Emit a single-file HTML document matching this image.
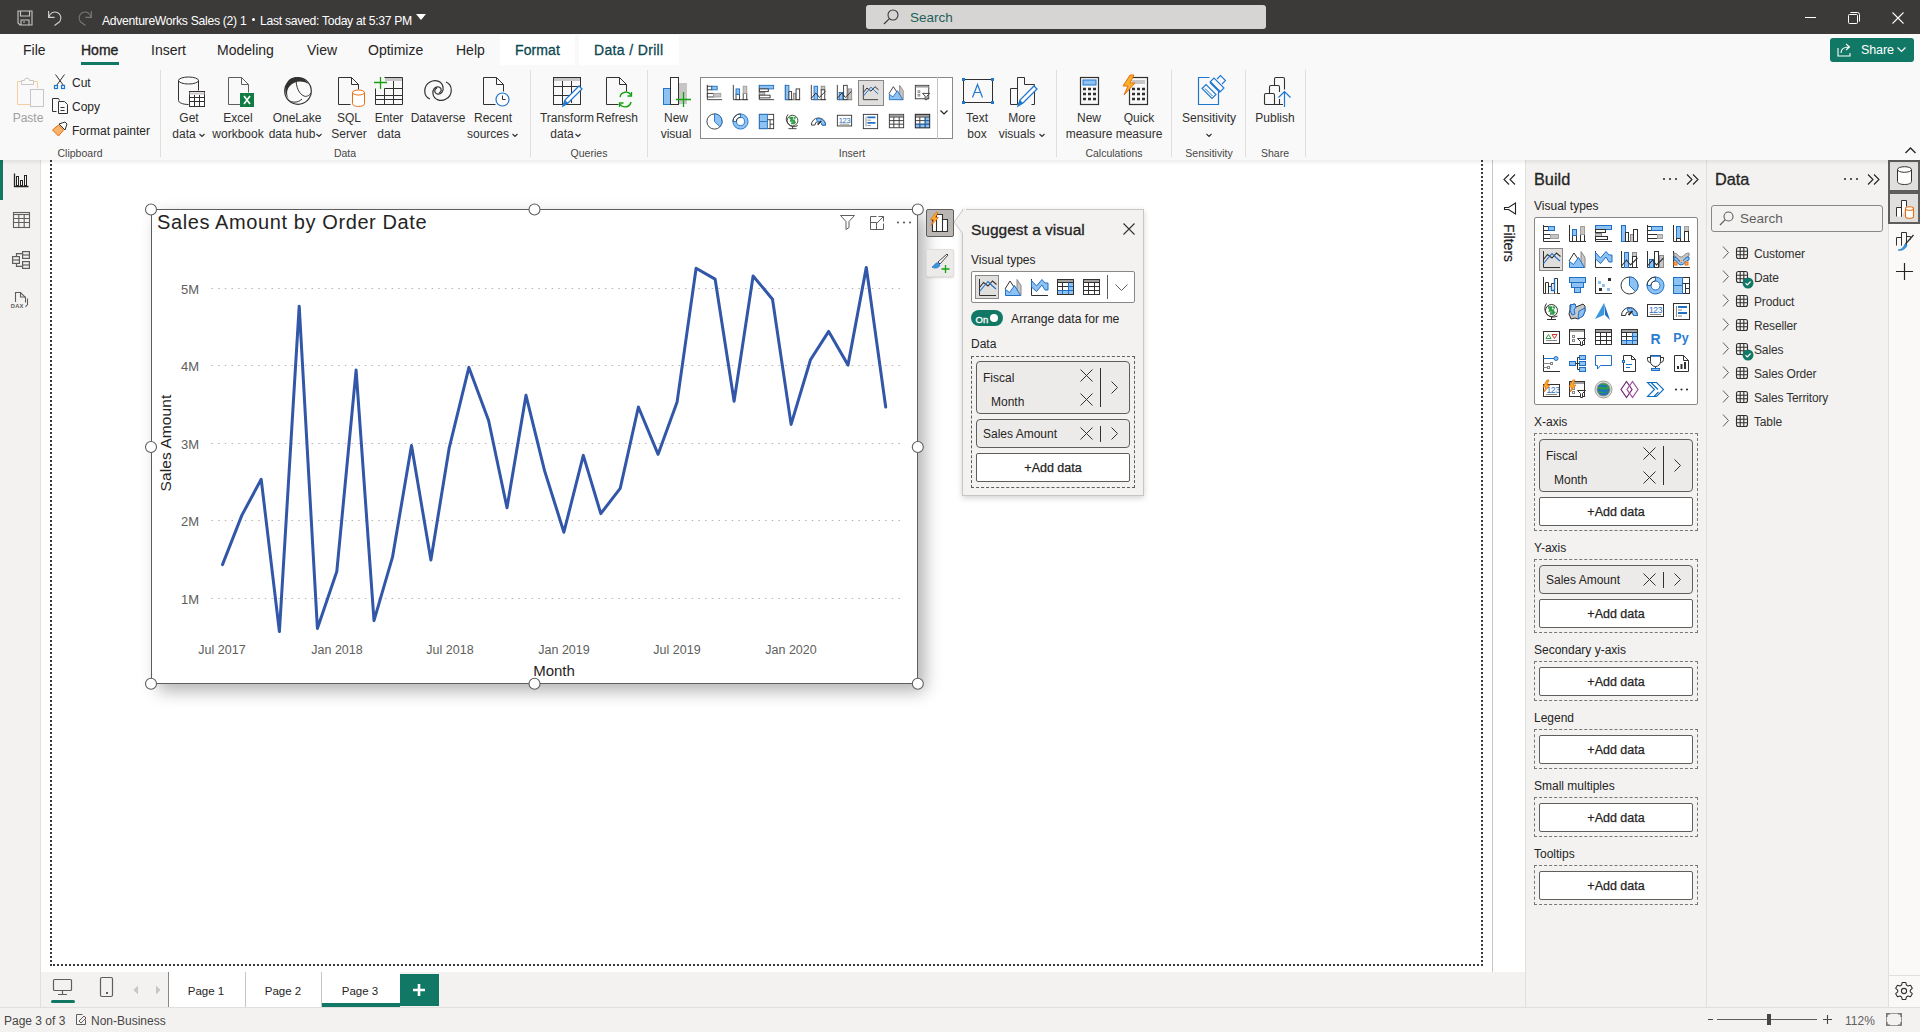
<!DOCTYPE html>
<html><head><meta charset="utf-8">
<style>
*{box-sizing:border-box;margin:0;padding:0}
html,body{width:1920px;height:1032px;overflow:hidden;background:#fff;font-family:"Liberation Sans",sans-serif;color:#252423}
.a{position:absolute}
.t{position:absolute;white-space:nowrap;line-height:1}
svg{position:absolute;overflow:visible}
#titlebar{left:0;top:0;width:1920px;height:34px;background:#3b3a39}
#ribbon{left:0;top:34px;width:1920px;height:126px;background:#f9f9f9}
#leftnav{left:0;top:160px;width:41px;height:847px;background:#f3f2f1;border-right:1px solid #e1dfdd}
#canvas{left:41px;top:160px;width:1451px;height:812px;background:#fff}
#tabbar{left:41px;top:972px;width:1484px;height:35px;background:#f3f2f1}
#status{left:0;top:1007px;width:1920px;height:25px;background:#f3f2f1;border-top:1px solid #e1dfdd}
#filters{left:1492px;top:160px;width:33px;height:812px;background:#fff;border-left:1px solid #c8c6c4}
#build{left:1525px;top:160px;width:182px;height:847px;background:#f3f2f1;border-left:1px solid #e1dfdd;border-right:1px solid #e1dfdd}
#data{left:1707px;top:160px;width:181px;height:847px;background:#f3f2f1}
#rstrip{left:1888px;top:160px;width:32px;height:847px;background:#faf9f8;border-left:1px solid #e1dfdd}
.lbl{font-size:12px;color:#252423}
.grp{font-size:10.5px;color:#484644}
.rb{font-size:12px;color:#323130;text-align:center}
</style></head><body>
<div id="titlebar" class="a"></div>
<div id="ribbon" class="a"></div><div class="a" style="left:0;top:160px;width:1920px;height:5px;background:linear-gradient(rgba(0,0,0,0.07),rgba(0,0,0,0));z-index:5"></div>
<div id="leftnav" class="a"></div>
<div id="canvas" class="a"></div>
<div id="tabbar" class="a"></div>
<div id="status" class="a"></div>
<div id="filters" class="a"></div>
<div id="build" class="a"></div>
<div id="data" class="a"></div>
<div id="rstrip" class="a"></div>

<!-- TITLEBAR -->
<svg style="left:17px;top:10px" width="16" height="16" viewBox="0 0 16 16"><path d="M1 1h14v14H3l-2-2z" fill="none" stroke="#c8c6c4" stroke-width="1.1"/><path d="M3.5 1v5h9V1M4 15v-5h8v5M6 12h2" fill="none" stroke="#c8c6c4" stroke-width="1.1"/></svg>
<svg style="left:48px;top:10px" width="14" height="16" viewBox="0 0 14 16"><path d="M0.6 1v6.4h6" fill="none" stroke="#d2d0ce" stroke-width="1.1"/><path d="M1 7A6 6 0 1 1 11.6 11.8L6.5 15.5" fill="none" stroke="#d2d0ce" stroke-width="1.1"/></svg>
<svg style="left:78px;top:10px" width="14" height="16" viewBox="0 0 14 16"><path d="M13.4 1v6.4h-6" fill="none" stroke="#797775" stroke-width="1.1"/><path d="M13 7A6 6 0 1 0 2.4 11.8L7.5 15.5" fill="none" stroke="#797775" stroke-width="1.1"/></svg>
<div class="t" style="left:102px;top:15px;font-size:12.2px;color:#fff;letter-spacing:-0.3px">AdventureWorks Sales (2) 1</div>
<div class="a" style="left:252px;top:18px;width:3px;height:3px;border-radius:50%;background:#fff"></div>
<div class="t" style="left:260px;top:15px;font-size:12.2px;color:#fff;letter-spacing:-0.3px">Last saved: Today at 5:37 PM</div>
<svg style="left:416px;top:14px" width="10" height="6"><path d="M0 0h10L5 6z" fill="#fff"/></svg>
<div class="a" style="left:866px;top:5px;width:400px;height:24px;background:#d6d5d4;border-radius:3px"></div>
<svg style="left:883px;top:9px" width="16" height="16" viewBox="0 0 16 16"><circle cx="10" cy="6" r="5" fill="none" stroke="#3b3a39" stroke-width="1.1"/><path d="M6.4 9.6L1 15" stroke="#3b3a39" stroke-width="1.2"/></svg>
<div class="t" style="left:910px;top:10.5px;font-size:13.5px;color:#1f5f59">Search</div>
<div class="a" style="left:1805px;top:17px;width:11px;height:1px;background:#fff"></div>
<svg style="left:1848px;top:12px" width="12" height="12" viewBox="0 0 12 12"><rect x="0.5" y="2.5" width="9" height="9" rx="1" fill="none" stroke="#fff"/><path d="M2.5 0.5h7a2 2 0 0 1 2 2v7" fill="none" stroke="#fff"/></svg>
<svg style="left:1892px;top:12px" width="12" height="12" viewBox="0 0 12 12"><path d="M0.5 0.5l11 11M11.5 0.5l-11 11" stroke="#fff" stroke-width="1.1"/></svg>

<!-- RIBBON TABS -->
<div class="a" style="left:500px;top:35px;width:75px;height:30px;background:#fff"></div>
<div class="a" style="left:579px;top:35px;width:100px;height:30px;background:#fff"></div>
<div class="t" style="left:23px;top:43px;font-size:14px;color:#252423">File</div>
<div class="t" style="left:81px;top:43px;font-size:14px;color:#252423;-webkit-text-stroke:0.35px #252423">Home</div>
<div class="a" style="left:81px;top:62px;width:38px;height:3px;background:#117865"></div>
<div class="t" style="left:151px;top:43px;font-size:14px;color:#252423">Insert</div>
<div class="t" style="left:217px;top:43px;font-size:14px;color:#252423">Modeling</div>
<div class="t" style="left:307px;top:43px;font-size:14px;color:#252423">View</div>
<div class="t" style="left:368px;top:43px;font-size:14px;color:#252423">Optimize</div>
<div class="t" style="left:456px;top:43px;font-size:14px;color:#252423">Help</div>
<div class="t" style="left:515px;top:43px;font-size:14px;color:#0d4750;-webkit-text-stroke:0.3px #0d4750;letter-spacing:0.1px">Format</div>
<div class="t" style="left:594px;top:43px;font-size:14px;color:#0d4750;-webkit-text-stroke:0.3px #0d4750;letter-spacing:0.35px">Data / Drill</div>
<!-- share -->
<div class="a" style="left:1830px;top:38px;width:84px;height:24px;background:#117865;border-radius:3px"></div>
<svg style="left:1837px;top:43px" width="16" height="14" viewBox="0 0 16 14"><path d="M1 5v8h12v-3" fill="none" stroke="#fff" stroke-width="1.1"/><path d="M4 10c0-4 3-6 8-6M9 1l3.5 3L9 7" fill="none" stroke="#fff" stroke-width="1.1"/></svg>
<div class="t" style="left:1861px;top:44px;font-size:12.5px;color:#fff;letter-spacing:-0.1px">Share</div>
<svg style="left:1897px;top:47px" width="9" height="6"><path d="M0.5 0.5l4 4 4-4" fill="none" stroke="#fff" stroke-width="1.2"/></svg>
<svg style="left:1905px;top:147px" width="11" height="7"><path d="M0.5 6l5-5 5 5" fill="none" stroke="#252423" stroke-width="1.3"/></svg>
<!-- separators -->
<div class="a" style="left:160px;top:70px;width:1px;height:87px;background:#e1dfdd"></div>
<div class="a" style="left:530px;top:70px;width:1px;height:87px;background:#e1dfdd"></div>
<div class="a" style="left:647px;top:70px;width:1px;height:87px;background:#e1dfdd"></div>
<div class="a" style="left:1056px;top:70px;width:1px;height:87px;background:#e1dfdd"></div>
<div class="a" style="left:1171px;top:70px;width:1px;height:87px;background:#e1dfdd"></div>
<div class="a" style="left:1245px;top:70px;width:1px;height:87px;background:#e1dfdd"></div>
<div class="a" style="left:1305px;top:70px;width:1px;height:87px;background:#e1dfdd"></div>
<!-- group labels -->
<div class="t grp" style="left:80px;top:148px;transform:translateX(-50%)">Clipboard</div>
<div class="t grp" style="left:345px;top:148px;transform:translateX(-50%)">Data</div>
<div class="t grp" style="left:589px;top:148px;transform:translateX(-50%)">Queries</div>
<div class="t grp" style="left:852px;top:148px;transform:translateX(-50%)">Insert</div>
<div class="t grp" style="left:1114px;top:148px;transform:translateX(-50%)">Calculations</div>
<div class="t grp" style="left:1209px;top:148px;transform:translateX(-50%)">Sensitivity</div>
<div class="t grp" style="left:1275px;top:148px;transform:translateX(-50%)">Share</div>
<div class="t rb" style="left:28px;top:112px;transform:translateX(-50%);color:#a19f9d">Paste</div>
<div class="t rb" style="left:189px;top:112px;transform:translateX(-50%);color:#323130">Get</div>
<div class="t rb" style="left:189px;top:128px;transform:translateX(-50%);color:#323130">data<span style="display:inline-block;width:10px"></span></div>
<div class="t rb" style="left:238px;top:112px;transform:translateX(-50%);color:#323130">Excel</div>
<div class="t rb" style="left:238px;top:128px;transform:translateX(-50%);color:#323130">workbook</div>
<div class="t rb" style="left:297px;top:112px;transform:translateX(-50%);color:#323130">OneLake</div>
<div class="t rb" style="left:297px;top:128px;transform:translateX(-50%);color:#323130">data hub<span style="display:inline-block;width:10px"></span></div>
<div class="t rb" style="left:349px;top:112px;transform:translateX(-50%);color:#323130">SQL</div>
<div class="t rb" style="left:349px;top:128px;transform:translateX(-50%);color:#323130">Server</div>
<div class="t rb" style="left:389px;top:112px;transform:translateX(-50%);color:#323130">Enter</div>
<div class="t rb" style="left:389px;top:128px;transform:translateX(-50%);color:#323130">data</div>
<div class="t rb" style="left:438px;top:112px;transform:translateX(-50%);color:#323130">Dataverse</div>
<div class="t rb" style="left:493px;top:112px;transform:translateX(-50%);color:#323130">Recent</div>
<div class="t rb" style="left:493px;top:128px;transform:translateX(-50%);color:#323130">sources<span style="display:inline-block;width:10px"></span></div>
<div class="t rb" style="left:567px;top:112px;transform:translateX(-50%);color:#323130">Transform</div>
<div class="t rb" style="left:567px;top:128px;transform:translateX(-50%);color:#323130">data<span style="display:inline-block;width:10px"></span></div>
<div class="t rb" style="left:617px;top:112px;transform:translateX(-50%);color:#323130">Refresh</div>
<div class="t rb" style="left:676px;top:112px;transform:translateX(-50%);color:#323130">New</div>
<div class="t rb" style="left:676px;top:128px;transform:translateX(-50%);color:#323130">visual</div>
<div class="t rb" style="left:977px;top:112px;transform:translateX(-50%);color:#323130">Text</div>
<div class="t rb" style="left:977px;top:128px;transform:translateX(-50%);color:#323130">box</div>
<div class="t rb" style="left:1022px;top:112px;transform:translateX(-50%);color:#323130">More</div>
<div class="t rb" style="left:1022px;top:128px;transform:translateX(-50%);color:#323130">visuals<span style="display:inline-block;width:10px"></span></div>
<div class="t rb" style="left:1089px;top:112px;transform:translateX(-50%);color:#323130">New</div>
<div class="t rb" style="left:1089px;top:128px;transform:translateX(-50%);color:#323130">measure</div>
<div class="t rb" style="left:1139px;top:112px;transform:translateX(-50%);color:#323130">Quick</div>
<div class="t rb" style="left:1139px;top:128px;transform:translateX(-50%);color:#323130">measure</div>
<div class="t rb" style="left:1209px;top:112px;transform:translateX(-50%);color:#323130">Sensitivity</div>
<div class="t rb" style="left:1275px;top:112px;transform:translateX(-50%);color:#323130">Publish</div>

<div class="t lbl" style="left:72px;top:77px">Cut</div>
<div class="t lbl" style="left:72px;top:101px">Copy</div>
<div class="t lbl" style="left:72px;top:125px">Format painter</div>
<!-- gallery -->
<div class="a" style="left:700px;top:77px;width:253px;height:62px;border:1px solid #8a8886;background:#fff"></div>
<div class="a" style="left:858px;top:80px;width:26px;height:26px;background:#e1dfdd;border:1px solid #8a8886"></div>
<div class="a" style="left:937px;top:77px;width:1px;height:62px;background:#c8c6c4"></div>
<svg style="left:940px;top:110px" width="8" height="5"><path d="M0.5 0.5l3.5 3.5 3.5-3.5" fill="none" stroke="#252423" stroke-width="1.2"/></svg>

<svg style="left:0;top:0" width="1920" height="170" viewBox="0 0 1920 170">
<g fill="none" stroke-width="1">
<!-- chevrons for dropdown labels -->
<path d="M199.5 134l2.5 2.5 2.5-2.5M316.5 134l2.5 2.5 2.5-2.5M512.5 134l2.5 2.5 2.5-2.5M575.5 134l2.5 2.5 2.5-2.5M1039.5 134l2.5 2.5 2.5-2.5M1206.5 134l2.5 2.5 2.5-2.5" stroke="#323130" stroke-width="1.1"/>
<!-- paste -->
<path d="M21.5 81.5h-4v23h13" stroke="#f6cf9d"/><path d="M33.5 81.5h4v7" stroke="#f6cf9d"/>
<path d="M21.5 84.5v-4h3a2.5 2.5 0 0 1 5 0h4v4z" stroke="#c8c6c4"/>
<rect x="30.5" y="89.5" width="13" height="17" stroke="#c8c6c4"/>
<!-- cut -->
<path d="M55.5 74.5l8 11M64.5 74.5l-8 11" stroke="#323130"/>
<rect x="54.5" y="85.5" width="3" height="3" stroke="#1f77d0" stroke-width="1.2"/><rect x="61.5" y="85.5" width="3" height="3" stroke="#1f77d0" stroke-width="1.2"/>
<!-- copy -->
<path d="M56.5 111.5h-4v-13h6l1 2" stroke="#323130"/><path d="M58.5 101.5h6l3 3v9h-9z" stroke="#323130"/><path d="M60.5 107.5h4M60.5 110.5h4" stroke="#323130"/>
<!-- format painter -->
<path d="M52.5 130l6-5 5 5-5 6z" fill="#f7b46b" stroke="#e86c11"/><path d="M59 124l6-2 2 2-2 6z" fill="#fff" stroke="#323130"/>
<!-- get data -->
<path d="M178.5 80.5v20c0 2 4 4 10 4M198.5 80.5v10" stroke="#323130"/><ellipse cx="188.5" cy="80.5" rx="10" ry="3.5" stroke="#323130"/>
<rect x="189.5" y="91.5" width="15" height="15" fill="#fff" stroke="#323130"/><path d="M189.5 93.5h15" stroke="#c8c6c4" stroke-width="2"/><path d="M189.5 97.5h15M189.5 101.5h15M194.5 95v12M199.5 95v12" stroke="#323130"/>
<!-- excel -->
<path d="M228.5 77.5h13l7 7v8M240.5 104.5h-12v-27M241.5 77.5v7h7" stroke="#605e5c"/>
<rect x="240" y="93" width="14" height="14" fill="#107c41" stroke="none"/><path d="M244 96l6 8M250 96l-6 8" stroke="#fff" stroke-width="1.6"/>
<!-- onelake -->
<circle cx="298" cy="91" r="13.3" stroke="#323130" stroke-width="1.2"/><path d="M287 83c2-5 8-7 14-5c3 1 6 3 7 6c-6-4-14-3-19 3c-3 4-2 9 0 12c-4-4-5-11-2-16z" fill="#323130" stroke="none"/><path d="M296 79c0 8 3 15 8 17c2 1 5 0 7-3" stroke="#323130"/><path d="M288 100c4 3 10 3 14-1" stroke="#323130"/>
<!-- sql -->
<path d="M350.5 104.5h-12v-27h13l7 7v5M351.5 77.5v7h7" stroke="#323130"/>
<path d="M352.5 92.5v11c0 2 3 3 6 3s6-1 6-3v-11" stroke="#e86c11" fill="#fff"/><ellipse cx="358.5" cy="92.5" rx="6" ry="2.5" stroke="#e86c11" fill="#fff"/>
<!-- enter data -->
<path d="M384.5 77.5h18v27h-27v-16" stroke="#323130"/><rect x="385" y="78" width="17" height="3" fill="#c8c6c4" stroke="none"/>
<path d="M375.5 95.5h27M375.5 99.5h27M384.5 88.5h18M384.5 88.5v16M393.5 81v24" stroke="#323130"/>
<path d="M380.5 77v12M374 82.5h13" stroke="#13a10e" stroke-width="1.3"/>
<!-- dataverse -->
<path d="M430 99c-7-3-7-13 0-17c5-3 12-1 13 5c1 4-2 8-6 7c-3-1-3-5 0-6" stroke="#323130" stroke-width="1.2"/><path d="M446 82c7 3 7 13 0 17c-5 3-12 1-13-5c-1-4 2-8 6-7c3 1 3 5 0 6" stroke="#323130" stroke-width="1.2"/>
<!-- recent sources -->
<path d="M495.5 104.5h-12v-27h13l7 7v7M496.5 77.5v7h7" stroke="#323130"/>
<circle cx="502.5" cy="99.5" r="6.5" fill="#fff" stroke="#1f77d0" stroke-width="1.2"/><path d="M502.5 95.5v4h3" stroke="#323130"/>
<!-- transform -->
<rect x="553.5" y="77.5" width="27" height="27" stroke="#323130"/><rect x="554" y="78" width="26" height="3" fill="#c8c6c4" stroke="none"/>
<path d="M553.5 86.5h27M553.5 95.5h22M562.5 81v24M571.5 81v22" stroke="#323130"/>
<path d="M563 106l2-6 14-14 3 3-14 14z" fill="#fff" stroke="#1f77d0" stroke-width="1.3"/><path d="M563 106l2-6 3 3z" fill="#1f77d0"/>
<!-- refresh -->
<path d="M618.5 104.5h-12v-27h13l7 7v7M619.5 77.5v7h7" stroke="#323130"/>
<path d="M620 97a6 6 0 0 1 11-2M631 102a6 6 0 0 1-11 2" stroke="#13a10e" stroke-width="1.4"/><path d="M631.5 92v4h-4M619.5 107v-4h4" stroke="#13a10e" stroke-width="1.3"/>
<!-- new visual -->
<rect x="663.5" y="88.5" width="7" height="16" fill="#8ec2f2" stroke="#1f77d0"/><rect x="670.5" y="77.5" width="8" height="27" fill="#fff" stroke="#323130"/><rect x="679" y="83" width="8" height="21" fill="#c8c6c4" stroke="none"/>
<path d="M683.5 92v15M676 99.5h15" stroke="#13a10e" stroke-width="1.3"/>
<!-- text box -->
<rect x="963.5" y="79.5" width="29" height="23" stroke="#323130"/>
<rect x="962" y="78" width="3" height="3" fill="#1f77d0" stroke="none"/><rect x="991" y="78" width="3" height="3" fill="#1f77d0" stroke="none"/><rect x="962" y="101" width="3" height="3" fill="#1f77d0" stroke="none"/><rect x="991" y="101" width="3" height="3" fill="#1f77d0" stroke="none"/>
<path d="M972.5 97.5l5-13 5 13M974.5 92.5h6" stroke="#1f77d0" stroke-width="1.2"/>
<!-- more visuals -->
<path d="M1017.5 104.5h-7v-16h7M1017.5 104.5v-27h7v7h10v20h-3" stroke="#323130"/>
<path d="M1018 106l2-6 14-14 3 3-14 14z" fill="#fff" stroke="#1f77d0" stroke-width="1.3"/><path d="M1018 106l2-6 3 3z" fill="#1f77d0"/>
<!-- new measure -->
<rect x="1080.5" y="77.5" width="18" height="27" stroke="#323130" stroke-width="1.2"/><rect x="1083" y="80" width="13" height="5" fill="#8ec2f2" stroke="#1f77d0"/>
<path d="M1083 89h3M1088 89h3M1093 89h3M1083 94h3M1088 94h3M1093 94h3M1083 99h3M1088 99h3M1093 99h3" stroke="#323130" stroke-width="2.4"/>
<!-- quick measure -->
<rect x="1129.5" y="77.5" width="18" height="27" stroke="#323130" stroke-width="1.2"/><rect x="1132" y="80" width="13" height="4" fill="#c8c6c4" stroke="none"/>
<path d="M1132 89h3M1137 89h3M1142 89h3M1132 94h3M1137 94h3M1142 94h3M1132 99h3M1137 99h3M1142 99h3" stroke="#323130" stroke-width="2.4"/>
<path d="M1130 75l-7 11h5l-4 9 11-12h-5l4-8z" fill="#f7b22c" stroke="#e86c11"/>
<!-- sensitivity -->
<path d="M1209.5 77.5h-11v27h20v-12.5" stroke="#1f77d0" stroke-width="1.2"/>
<path d="M1202 88.5l4-4 10 10-4 4z" stroke="#1f77d0" stroke-width="1.1"/><path d="M1205 88.5l7.5 7.5" stroke="#1f77d0" stroke-width="1"/>
<path d="M1210 82l4-4 10 10-4 4z" stroke="#1f77d0" stroke-width="1.1"/><path d="M1210.5 82.5l9.5 9.5" stroke="#1f77d0" stroke-width="2"/><path d="M1217 79l3.5-3.5 5 5-3.5 3.5" stroke="#1f77d0" stroke-width="1.1"/>
<!-- publish -->
<path d="M1274.5 104.5h-8.5a1.5 1.5 0 0 1-1.5-1.5v-8a1.5 1.5 0 0 1 1.5-1.5h7a1.5 1.5 0 0 1 1.5 1.5v9.5M1269.5 93.5v-6.5a1.5 1.5 0 0 1 1.5-1.5h7a1.5 1.5 0 0 1 1.5 1.5v5M1279.5 99v5.5M1274.5 85.5v-6.5a1.5 1.5 0 0 1 1.5-1.5h7a1.5 1.5 0 0 1 1.5 1.5v10.5M1264.5 104.5h18.5" stroke="#323130" stroke-width="1.1"/>
<path d="M1284.5 107v-15.5M1278.5 97.5l6-6 6 6" stroke="#1f77d0" stroke-width="1.2"/>
</g></svg>

<!-- LEFT NAV -->
<div class="a" style="left:0;top:160px;width:3px;height:40px;background:#117865"></div>
<svg style="left:0;top:160px" width="41" height="160" viewBox="0 160 41 160">
<g fill="none" stroke="#252423" stroke-width="1">
<path d="M14.5 173.5v13h14" stroke-width="1.3"/><rect x="16.5" y="176.5" width="2" height="9"/><rect x="20.5" y="180.5" width="2" height="5"/><rect x="24.5" y="175.5" width="2" height="10"/>
<rect x="13.5" y="212.5" width="16" height="15" stroke="#605e5c" stroke-width="1.1"/><path d="M13.5 214.5h16" stroke="#605e5c" stroke-width="1.1"/><path d="M13.5 218.5h16M13.5 222.5h16M18.8 214.5v13M24.2 214.5v13" stroke="#605e5c" stroke-width="1.1"/>
<g stroke="#605e5c" stroke-width="1.2"><rect x="12.6" y="256.6" width="6.8" height="6.8"/><path d="M12.6 260h6.8"/><rect x="22.6" y="251.6" width="6.8" height="6.8"/><path d="M22.6 255h6.8"/><rect x="22.6" y="261.6" width="6.8" height="6.8"/><path d="M22.6 265h6.8"/><path d="M16.5 256.6v-3h6M16.5 263.4v3h6"/></g>
<path d="M15.5 302v-9.5h5l5 5v5" stroke="#605e5c" stroke-width="1.1"/><path d="M20.5 292.5v4.5h5" stroke="#605e5c" stroke-width="1.1"/><path d="M27.5 298.5v6l-2 2.5" stroke="#605e5c" stroke-width="1.1"/>
</g>
<text x="10.8" y="307.6" font-size="5.8" fill="#605e5c" font-weight="bold" font-family="Liberation Sans" letter-spacing="0.2">DAX</text>
</svg>
<!-- CANVAS -->
<div class="a" style="left:50px;top:160px;width:1433px;height:806px;border-left:2px dotted #3b3a39;border-right:2px dotted #3b3a39;border-bottom:2px dotted #3b3a39"></div>
<!-- VISUAL -->
<div class="a" style="left:151px;top:209px;width:767px;height:475px;background:#fff;border:1px solid #605e5c;box-shadow:7px 7px 16px rgba(0,0,0,0.3)"></div>
<div class="t" style="left:157px;top:212px;font-size:20px;color:#252423;letter-spacing:0.6px">Sales Amount by Order Date</div>
<svg style="left:0;top:0" width="1000" height="700" viewBox="0 0 1000 700">
<g stroke="#b3b0ad" stroke-width="1.2" stroke-dasharray="1.4 5.27">
<path d="M211.5 288.5H900M211.5 365.5H900M211.5 443.5H900M211.5 520.5H900M211.5 598.5H900"/>
</g>
<polyline points="222.5,564.6 241.8,515.4 261.2,479.3 279.4,631.6 299.2,306.2 317.4,628.5 336.8,571.5 356.1,370.1 374.0,620.7 392.5,557.2 411.5,445.6 430.9,560.0 449.1,448.4 468.9,367.4 488.6,420.5 507.0,507.7 526.0,395.3 544.6,470.9 563.9,532.2 583.3,455.4 600.8,513.6 620.2,488.4 638.4,407.0 658.1,454.3 677.1,401.9 696.1,268.2 715.1,279.1 734.1,401.2 753.1,276.0 772.5,299.2 791.1,424.4 810.5,359.7 828.7,331.4 848.0,365.1 866.3,267.4 885.7,407.0" fill="none" stroke="#3257a8" stroke-width="3" stroke-linejoin="round" stroke-linecap="round"/>
<g fill="none" stroke="#605e5c" stroke-width="1">
<path d="M840.5 215.5h14l-5.5 6v6l-3 2v-8z"/>
<path d="M870.5 229.5v-13h6M883.5 223.5v6h-13M870.5 222.5h6v7M876.5 223.5l7-7M878.5 216.5h5v5"/>
</g>
<g fill="#605e5c"><circle cx="898" cy="222.5" r="1.1"/><circle cx="904" cy="222.5" r="1.1"/><circle cx="910" cy="222.5" r="1.1"/></g>
<g fill="#fff" stroke="#605e5c" stroke-width="1.1">
<circle cx="151" cy="209.5" r="5.5"/><circle cx="534.5" cy="209.5" r="5.5"/><circle cx="917.8" cy="209.5" r="5.5"/>
<circle cx="151" cy="447" r="5.5"/><circle cx="917.8" cy="447" r="5.5"/>
<circle cx="151" cy="683.8" r="5.5"/><circle cx="534.5" cy="683.8" r="5.5"/><circle cx="917.8" cy="683.8" r="5.5"/>
</g>
</svg>
<div class="t" style="left:166px;top:443px;font-size:15.5px;color:#252423;transform:translate(-50%,-50%) rotate(-90deg);letter-spacing:0.1px">Sales Amount</div>
<div class="t" style="left:199px;top:283px;font-size:13px;color:#605e5c;transform:translateX(-100%)">5M</div>
<div class="t" style="left:199px;top:360px;font-size:13px;color:#605e5c;transform:translateX(-100%)">4M</div>
<div class="t" style="left:199px;top:438px;font-size:13px;color:#605e5c;transform:translateX(-100%)">3M</div>
<div class="t" style="left:199px;top:515px;font-size:13px;color:#605e5c;transform:translateX(-100%)">2M</div>
<div class="t" style="left:199px;top:593px;font-size:13px;color:#605e5c;transform:translateX(-100%)">1M</div>
<div class="t" style="left:222px;top:644px;font-size:12.5px;color:#605e5c;transform:translateX(-50%)">Jul 2017</div>
<div class="t" style="left:337px;top:644px;font-size:12.5px;color:#605e5c;transform:translateX(-50%)">Jan 2018</div>
<div class="t" style="left:450px;top:644px;font-size:12.5px;color:#605e5c;transform:translateX(-50%)">Jul 2018</div>
<div class="t" style="left:564px;top:644px;font-size:12.5px;color:#605e5c;transform:translateX(-50%)">Jan 2019</div>
<div class="t" style="left:677px;top:644px;font-size:12.5px;color:#605e5c;transform:translateX(-50%)">Jul 2019</div>
<div class="t" style="left:791px;top:644px;font-size:12.5px;color:#605e5c;transform:translateX(-50%)">Jan 2020</div>
<div class="t" style="left:554px;top:663px;font-size:15px;color:#252423;transform:translateX(-50%)">Month</div>
<!-- PART2 -->
<svg width="0" height="0" style="position:absolute"><defs><symbol id="i-sbar" viewBox="0 0 19 19" overflow="visible"><g fill="none" stroke-width="1"><path d="M1.5 1v16.5H18" stroke="#323130"/><rect x="1.5" y="2.5" width="5" height="4" fill="#fff" stroke="#323130"/><rect x="6.5" y="2.5" width="6" height="4" fill="#8ec2f2" stroke="#1f6fc5"/><rect x="1.5" y="10.5" width="7" height="4" fill="#fff" stroke="#323130"/><rect x="8.5" y="10.5" width="8" height="4" fill="#c8c6c4" stroke="#a19f9d"/></g></symbol><symbol id="i-scol" viewBox="0 0 19 19" overflow="visible"><g fill="none" stroke-width="1"><path d="M1.5 1v16.5H18" stroke="#323130"/><rect x="4.5" y="11.5" width="4" height="6" fill="#fff" stroke="#323130"/><rect x="4.5" y="5.5" width="4" height="6" fill="#8ec2f2" stroke="#1f6fc5"/><rect x="12.5" y="10.5" width="4" height="7" fill="#fff" stroke="#323130"/><rect x="12.5" y="2.5" width="4" height="8" fill="#c8c6c4" stroke="#a19f9d"/></g></symbol><symbol id="i-cbar" viewBox="0 0 19 19" overflow="visible"><g fill="none" stroke-width="1"><path d="M1.5 1v16.5H18" stroke="#323130"/><rect x="1.5" y="1.5" width="16" height="4" fill="#8ec2f2" stroke="#1f6fc5"/><rect x="1.5" y="5.5" width="10" height="3" fill="#fff" stroke="#323130"/><rect x="1.5" y="9.5" width="6" height="3" fill="#c8c6c4" stroke="#8a8886"/><rect x="1.5" y="12.5" width="12" height="3" fill="#fff" stroke="#323130"/></g></symbol><symbol id="i-ccol" viewBox="0 0 19 19" overflow="visible"><g fill="none" stroke-width="1"><path d="M1.5 1v16.5H18" stroke="#323130"/><rect x="1.5" y="1.5" width="4" height="16" fill="#8ec2f2" stroke="#1f6fc5"/><rect x="5.5" y="8.5" width="3" height="9" fill="#fff" stroke="#323130"/><rect x="10.5" y="10.5" width="3" height="7" fill="#c8c6c4" stroke="#8a8886"/><rect x="13.5" y="5.5" width="4" height="12" fill="#fff" stroke="#323130"/></g></symbol><symbol id="i-pbar" viewBox="0 0 19 19" overflow="visible"><g fill="none" stroke-width="1"><path d="M1.5 1v16.5H18" stroke="#323130"/><rect x="1.5" y="2.5" width="4" height="4" fill="#fff" stroke="#323130"/><rect x="5.5" y="2.5" width="11" height="4" fill="#8ec2f2" stroke="#1f6fc5"/><rect x="1.5" y="10.5" width="10" height="4" fill="#fff" stroke="#323130"/><rect x="11.5" y="10.5" width="5" height="4" fill="#c8c6c4" stroke="#a19f9d"/></g></symbol><symbol id="i-pcol" viewBox="0 0 19 19" overflow="visible"><g fill="none" stroke-width="1"><path d="M1.5 1v16.5H18" stroke="#323130"/><rect x="4.5" y="2.5" width="4" height="12" fill="#8ec2f2" stroke="#1f6fc5"/><rect x="4.5" y="14.5" width="4" height="3" fill="#fff" stroke="#323130"/><rect x="12.5" y="2.5" width="4" height="5" fill="#c8c6c4" stroke="#a19f9d"/><rect x="12.5" y="7.5" width="4" height="10" fill="#fff" stroke="#323130"/></g></symbol><symbol id="i-line" viewBox="0 0 19 19" overflow="visible"><g fill="none" stroke-width="1"><path d="M1.5 1v16.5H18" stroke="#323130"/><path d="M1.5 9.5l4-5 4.5 3.5 4.5-5 4 3.5" stroke="#323130" stroke-width="1.1"/><path d="M1.5 13.5l8.5-10 4 4 4 3.5" stroke="#1f6fc5" stroke-width="1.1"/></g></symbol><symbol id="i-area" viewBox="0 0 19 19" overflow="visible"><g fill="none" stroke-width="1"><path d="M13 1.5l4 6v10h-4z" fill="#c8c6c4" stroke="#8a8886"/><path d="M1 11l5-8 6 9" fill="#fff" stroke="#323130"/><path d="M1.5 17.5v-6l4 3 5-7 6 10z" fill="#8ec2f2" stroke="#1f6fc5"/></g></symbol><symbol id="i-sarea" viewBox="0 0 19 19" overflow="visible"><g fill="none" stroke-width="1"><path d="M1.5 1v16.5H18" stroke="#323130"/><path d="M1.5 2.5l5 5.5 5.5-6.5 3 3.5h3v7h-3l-3-5-5.5 6.5-5-4.5z" fill="#8ec2f2" stroke="#1f6fc5"/></g></symbol><symbol id="i-lscol" viewBox="0 0 19 19" overflow="visible"><g fill="none" stroke-width="1"><path d="M1.5 1v16.5H18" stroke="#323130"/><rect x="4.5" y="2.5" width="4" height="15" fill="#8ec2f2" stroke="#1f6fc5"/><rect x="12.5" y="2.5" width="4" height="4" fill="#c8c6c4" stroke="#8a8886"/><rect x="12.5" y="6.5" width="4" height="11" fill="#fff" stroke="#323130"/><path d="M1.5 16l5-6 4 5 7-7" stroke="#323130" stroke-width="1.1"/></g></symbol><symbol id="i-lccol" viewBox="0 0 19 19" overflow="visible"><g fill="none" stroke-width="1"><path d="M1.5 1v16.5H18" stroke="#323130"/><rect x="3.5" y="9.5" width="4" height="8" fill="#8ec2f2" stroke="#1f6fc5"/><rect x="8.5" y="1.5" width="4" height="16" fill="#fff" stroke="#323130"/><rect x="13.5" y="5.5" width="4" height="12" fill="#c8c6c4" stroke="#8a8886"/><path d="M1.5 16l5-6 4 5 7-7" stroke="#323130" stroke-width="1.1"/></g></symbol><symbol id="i-ribbon" viewBox="0 0 19 19" overflow="visible"><g fill="none" stroke-width="1"><path d="M1.5 1v16.5H18" stroke="#323130"/><path d="M2 3c4 0 4 4 7 4s3-4 8-4v3c-4 0-4 5-8 5s-3-5-7-5z" fill="#c8c6c4" stroke="#8a8886"/><path d="M2 7c4 0 4 5 7 5s3-5 8-5v3c-4 0-4 5-8 5s-3-5-7-5z" fill="#8ec2f2" stroke="#1f6fc5"/><rect x="2" y="12" width="3" height="3" fill="#f7b46b" stroke="#e86c11"/><rect x="13" y="12" width="3" height="3" fill="#f7b46b" stroke="#e86c11"/><rect x="8" y="10" width="3" height="2" fill="#f7b46b"/></g></symbol><symbol id="i-water" viewBox="0 0 19 19" overflow="visible"><g fill="none" stroke-width="1"><path d="M1.5 1v16.5H18" stroke="#323130"/><path d="M3.5 17.5V6.5h3v11M6.5 17.5V10.5h3v-3h3v10M12.5 17.5V2.5h3v15" fill="#fff" stroke="#323130"/><path d="M9.5 9.5v5h3v-12" stroke="#1f6fc5" stroke-width="1.4"/></g></symbol><symbol id="i-funnel" viewBox="0 0 19 19" overflow="visible"><g fill="none" stroke-width="1"><rect x="1.5" y="1.5" width="16" height="5" fill="#8ec2f2" stroke="#1f6fc5"/><rect x="3.5" y="6.5" width="12" height="5" fill="#8ec2f2" stroke="#1f6fc5"/><rect x="6.5" y="11.5" width="6" height="5" fill="#8ec2f2" stroke="#1f6fc5"/></g></symbol><symbol id="i-scatter" viewBox="0 0 19 19" overflow="visible"><g fill="none" stroke-width="1"><path d="M1.5 1v16.5H18" stroke="#323130"/><rect x="5" y="12" width="3" height="3" fill="#323130"/><rect x="14" y="2" width="3" height="3" fill="#323130"/><rect x="4" y="5" width="3" height="3" fill="#8ec2f2"/><rect x="8" y="8" width="3" height="3" fill="#8ec2f2"/><rect x="13" y="12" width="3" height="3" fill="#8ec2f2"/></g></symbol><symbol id="i-pie" viewBox="0 0 19 19" overflow="visible"><g fill="none" stroke-width="1"><circle cx="9.5" cy="9.5" r="8.5" fill="#fff" stroke="#323130"/><path d="M9.5 1a8.5 8.5 0 0 1 6 14.5L9.5 9.5z" fill="#8ec2f2" stroke="#1f6fc5"/></g></symbol><symbol id="i-donut" viewBox="0 0 19 19" overflow="visible"><g fill="none" stroke-width="1"><circle cx="9.5" cy="9.5" r="6.5" stroke="#fff" stroke-width="4"/><path d="M9.5 3a6.5 6.5 0 1 1-6.5 6.5" stroke="#8ec2f2" stroke-width="4"/><circle cx="9.5" cy="9.5" r="8.5" stroke="#1f6fc5"/><circle cx="9.5" cy="9.5" r="4.5" stroke="#1f6fc5"/><path d="M1 9.5a8.5 8.5 0 0 1 8.5-8.5M5 9.5a4.5 4.5 0 0 1 4.5-4.5" stroke="#323130"/><path d="M9.5 1v4M1 9.5h4" stroke="#1f6fc5"/></g></symbol><symbol id="i-treemap" viewBox="0 0 19 19" overflow="visible"><g fill="none" stroke-width="1"><rect x="1.5" y="1.5" width="16" height="16" fill="#fff" stroke="#323130"/><rect x="1.5" y="1.5" width="9" height="16" fill="#8ec2f2" stroke="#1f6fc5"/><path d="M1.5 9.5h9" stroke="#1f6fc5"/><path d="M10.5 7.5h7M13.5 7.5v10M13.5 12.5h4" stroke="#323130"/></g></symbol><symbol id="i-globe" viewBox="0 0 19 19" overflow="visible"><g fill="none" stroke-width="1"><circle cx="9.5" cy="8.5" r="6" fill="#fff" stroke="#323130"/><path d="M6 5.5h3l-1 3h3v3h-3" fill="none" stroke="#2f9e44" stroke-width="2.4"/><path d="M11 5l2 1M12 10l1 1" stroke="#2f9e44" stroke-width="2"/><path d="M4.5 1.5a8.5 8.5 0 0 0 11 12.5M9.5 15v2.5M5 17.5h9" stroke="#323130"/></g></symbol><symbol id="i-fmap" viewBox="0 0 19 19" overflow="visible"><g fill="none" stroke-width="1"><path d="M2 3l5-1 1 3 7-3 2 2v5l-2 5-5 3-3-1-4 1-2-5 1-4z" fill="#c8c6c4" stroke="#323130"/><path d="M2 3l5-1 1 3-2 3 1 4-3 1-2-5 1-4zM11 9l6-3v3l-2 5-5 3z" fill="#8ec2f2" stroke="#1f6fc5"/></g></symbol><symbol id="i-azmap" viewBox="0 0 19 19" overflow="visible"><g fill="none" stroke-width="1"><path d="M10 1L1 17l9-4z" fill="#3a96dd"/><path d="M10 1l1 12 5 5z" fill="#1f6fc5"/></g></symbol><symbol id="i-gauge" viewBox="0 0 19 19" overflow="visible"><g fill="none" stroke-width="1"><path d="M1.5 13.5a8 8 0 0 1 16 0h-4a4 4 0 0 0-8 0z" fill="#fff" stroke="#323130"/><path d="M7 6.5a8 8 0 0 1 10.5 7h-4a4 4 0 0 0-5-3.5z" fill="#8ec2f2" stroke="#1f6fc5"/><path d="M8.5 13l4-4" stroke="#323130" stroke-width="1.8"/></g></symbol><symbol id="i-card" viewBox="0 0 19 19" overflow="visible"><g fill="none" stroke-width="1"><rect x="1.5" y="2.5" width="16" height="12" fill="#fff" stroke="#323130"/><text x="9.5" y="10.8" font-size="8.5" text-anchor="middle" fill="#1f6fc5" font-family="Liberation Sans" letter-spacing="-0.4">123</text><path d="M4 12.5h11" stroke="#8a8886"/></g></symbol><symbol id="i-mrcard" viewBox="0 0 19 19" overflow="visible"><g fill="none" stroke-width="1"><rect x="1.5" y="1.5" width="16" height="16" fill="#fff" stroke="#323130"/><path d="M4.5 4v11" stroke="#8a8886"/><path d="M6 5h9M6 11h9" stroke="#1f6fc5" stroke-width="2"/><path d="M6 8h4M6 14h4" stroke="#8a8886"/></g></symbol><symbol id="i-kpi" viewBox="0 0 19 19" overflow="visible"><g fill="none" stroke-width="1"><rect x="1.5" y="3.5" width="16" height="12" fill="#fff" stroke="#323130"/><path d="M4 10.5l2.5-4 2.5 4z" fill="#fff" stroke="#2f9e44"/><path d="M10 6.5h5l-2.5 4z" fill="#fff" stroke="#d13438"/><path d="M4 12.5h11" stroke="#8a8886"/></g></symbol><symbol id="i-slicer" viewBox="0 0 19 19" overflow="visible"><g fill="none" stroke-width="1"><rect x="1.5" y="1.5" width="15" height="15" fill="#fff" stroke="#323130"/><rect x="2" y="2" width="14" height="2" fill="#a19f9d"/><rect x="4.5" y="7.5" width="2" height="2" stroke="#8a8886"/><rect x="4.5" y="11.5" width="2" height="2" stroke="#8a8886"/><path d="M9.5 10.5h8l-3 3v4h-2v-4z" fill="#fff" stroke="#323130"/></g></symbol><symbol id="i-table" viewBox="0 0 19 19" overflow="visible"><g fill="none" stroke-width="1"><rect x="1.5" y="1.5" width="16" height="15" fill="#fff" stroke="#323130"/><rect x="2" y="2" width="15" height="2" fill="#a19f9d"/><path d="M1.5 4.5h16M1.5 8.5h16M1.5 12.5h16M6.5 4.5v12M12.5 4.5v12" stroke="#323130"/></g></symbol><symbol id="i-matrix" viewBox="0 0 19 19" overflow="visible"><g fill="none" stroke-width="1"><rect x="1.5" y="1.5" width="16" height="15" fill="#fff" stroke="#323130"/><rect x="2" y="2" width="15" height="2" fill="#a19f9d"/><rect x="12.5" y="4.5" width="5" height="12" fill="#8ec2f2"/><rect x="1.5" y="12.5" width="16" height="4" fill="#8ec2f2"/><path d="M1.5 4.5h16M1.5 8.5h16M1.5 12.5h16M6.5 4.5v12M12.5 4.5v12" stroke="#323130"/><path d="M12.5 8.5h5M1.5 12.5h16M6.5 12.5v4M12.5 4.5v12" stroke="#1f6fc5"/><rect x="1.5" y="1.5" width="16" height="15" stroke="#323130"/></g></symbol><symbol id="i-R" viewBox="0 0 19 19" overflow="visible"><g fill="none" stroke-width="1"><text x="9.5" y="15.5" font-size="14" font-weight="bold" text-anchor="middle" fill="#2b7cd3" font-family="Liberation Sans">R</text></g></symbol><symbol id="i-Py" viewBox="0 0 19 19" overflow="visible"><g fill="none" stroke-width="1"><text x="9" y="14" font-size="12.5" font-weight="bold" text-anchor="middle" fill="#2b7cd3" font-family="Liberation Sans">Py</text></g></symbol><symbol id="i-keyinf" viewBox="0 0 19 19" overflow="visible"><g fill="none" stroke-width="1"><path d="M1.5 1v16.5H18" stroke="#323130"/><path d="M1.5 4.5h11" stroke="#1f6fc5"/><circle cx="14" cy="4.5" r="2" fill="#8ec2f2" stroke="#1f6fc5"/><path d="M1.5 9.5h7M1.5 13.5h4" stroke="#8a8886"/><rect x="8.5" y="8.5" width="2" height="2" stroke="#8a8886"/><rect x="5.5" y="12.5" width="2" height="2" stroke="#8a8886"/></g></symbol><symbol id="i-decomp" viewBox="0 0 19 19" overflow="visible"><g fill="none" stroke-width="1"><rect x="1.5" y="7.5" width="6" height="4" fill="#8ec2f2" stroke="#1f6fc5"/><rect x="11.5" y="1.5" width="6" height="4" fill="#8ec2f2" stroke="#1f6fc5"/><rect x="11.5" y="7.5" width="6" height="4" fill="#8ec2f2" stroke="#1f6fc5"/><rect x="11.5" y="13.5" width="6" height="4" fill="#8ec2f2" stroke="#1f6fc5"/><path d="M7.5 9.5h2M9.5 3.5v12M9.5 3.5h2M9.5 9.5h2M9.5 15.5h2" stroke="#323130"/></g></symbol><symbol id="i-qa" viewBox="0 0 19 19" overflow="visible"><g fill="none" stroke-width="1"><path d="M1.5 1.5h16v10H6.5l-3 3.5v-3.5h-2z" fill="#fff" stroke="#1f6fc5"/></g></symbol><symbol id="i-narr" viewBox="0 0 19 19" overflow="visible"><g fill="none" stroke-width="1"><path d="M3.5 1.5h8l4 4v12h-12z" fill="#fff" stroke="#323130"/><path d="M11.5 1.5v4h4" stroke="#323130"/><rect x="2.5" y="6.5" width="2" height="2" fill="#8ec2f2" stroke="#1f6fc5"/><path d="M6 10.5h6M6 13.5h4" stroke="#1f6fc5"/></g></symbol><symbol id="i-trophy" viewBox="0 0 19 19" overflow="visible"><g fill="none" stroke-width="1"><path d="M4.5 1.5h10v6a5 5 0 0 1-10 0z" fill="#fff" stroke="#323130"/><path d="M4.5 3.5H1.5v2a3 3 0 0 0 3 3M14.5 3.5h3v2a3 3 0 0 1-3 3M9.5 12.5v2" stroke="#323130"/><path d="M5 2h9" stroke="#1f6fc5" stroke-width="1.6"/><rect x="5.5" y="14.5" width="8" height="2" fill="#8ec2f2" stroke="#1f6fc5"/></g></symbol><symbol id="i-pagin" viewBox="0 0 19 19" overflow="visible"><g fill="none" stroke-width="1"><path d="M2.5 1.5h9l5 5v11h-14z" fill="#fff" stroke="#323130"/><path d="M11.5 1.5v5h5" stroke="#323130"/><path d="M6 15v-3M9.5 15v-5M13 15v-7" stroke="#323130" stroke-width="2"/></g></symbol><symbol id="i-lcard" viewBox="0 0 19 19" overflow="visible"><g fill="none" stroke-width="1"><rect x="1.5" y="4.5" width="16" height="12" fill="#fff" stroke="#323130"/><text x="11" y="12.5" font-size="8.5" text-anchor="middle" fill="#1f6fc5" font-family="Liberation Sans" letter-spacing="-0.4">123</text><path d="M4 14.5h11" stroke="#8a8886"/><path d="M5 0l-4 7h3l-2 5 6-7H5l2-5z" fill="#f7b22c" stroke="#e86c11" stroke-width="0.8"/></g></symbol><symbol id="i-lslicer" viewBox="0 0 19 19" overflow="visible"><g fill="none" stroke-width="1"><rect x="1.5" y="1.5" width="15" height="15" fill="#fff" stroke="#323130"/><rect x="2" y="2" width="14" height="2" fill="#a19f9d"/><rect x="4.5" y="7.5" width="2" height="2" stroke="#8a8886"/><rect x="4.5" y="11.5" width="2" height="2" stroke="#8a8886"/><path d="M9.5 10.5h8l-3 3v4h-2v-4z" fill="#fff" stroke="#323130"/><path d="M5 0l-4 7h3l-2 5 6-7H5l2-5z" fill="#f7b22c" stroke="#e86c11" stroke-width="0.8"/></g></symbol><symbol id="i-arcgis" viewBox="0 0 19 19" overflow="visible"><g fill="none" stroke-width="1"><circle cx="9.5" cy="9.5" r="8.5" fill="#e1dfdd" stroke="#a19f9d"/><circle cx="9.5" cy="9.5" r="6.5" fill="#2f9e44"/><path d="M4 6c3-1 6 1 9 0M3.5 10c3 0 6 2 12 0M5 14c2 0 5 1 9-1" stroke="#1f6fc5" stroke-width="2.2"/><circle cx="9.5" cy="9.5" r="6.5" stroke="#8a8886" stroke-width="0.8"/></g></symbol><symbol id="i-papps" viewBox="0 0 19 19" overflow="visible"><g fill="none" stroke-width="1"><path d="M6.5 1.5l5.5 8-5.5 8-5.5-8z" stroke="#742774" stroke-width="1.2"/><path d="M12.5 1.5l5.5 8-5.5 8-5.5-8z" stroke="#9b4f96" stroke-width="1.2"/></g></symbol><symbol id="i-pauto" viewBox="0 0 19 19" overflow="visible"><g fill="none" stroke-width="1"><path d="M1.5 2.5h9l7 7-7 7h-9l7-7z" fill="#fff" stroke="#0f6cbd" stroke-width="1.1"/><path d="M5 2.5l7 7M8 16.5l4.5-4.5" stroke="#0f6cbd" stroke-width="1.1"/></g></symbol><symbol id="i-more" viewBox="0 0 19 19" overflow="visible"><g fill="none" stroke-width="1"><circle cx="4" cy="9.5" r="1.1" fill="#323130"/><circle cx="9.5" cy="9.5" r="1.1" fill="#323130"/><circle cx="15" cy="9.5" r="1.1" fill="#323130"/></g></symbol></defs></svg>
<svg style="left:706px;top:84px" width="17" height="17"><use href="#i-sbar" width="17" height="17"/></svg><svg style="left:732px;top:84px" width="17" height="17"><use href="#i-scol" width="17" height="17"/></svg><svg style="left:758px;top:84px" width="17" height="17"><use href="#i-cbar" width="17" height="17"/></svg><svg style="left:784px;top:84px" width="17" height="17"><use href="#i-ccol" width="17" height="17"/></svg><svg style="left:810px;top:84px" width="17" height="17"><use href="#i-lscol" width="17" height="17"/></svg><svg style="left:836px;top:84px" width="17" height="17"><use href="#i-lccol" width="17" height="17"/></svg><svg style="left:862px;top:84px" width="17" height="17"><use href="#i-line" width="17" height="17"/></svg><svg style="left:888px;top:84px" width="17" height="17"><use href="#i-area" width="17" height="17"/></svg><svg style="left:914px;top:84px" width="17" height="17"><use href="#i-slicer" width="17" height="17"/></svg><svg style="left:706px;top:113px" width="17" height="17"><use href="#i-pie" width="17" height="17"/></svg><svg style="left:732px;top:113px" width="17" height="17"><use href="#i-donut" width="17" height="17"/></svg><svg style="left:758px;top:113px" width="17" height="17"><use href="#i-treemap" width="17" height="17"/></svg><svg style="left:784px;top:113px" width="17" height="17"><use href="#i-globe" width="17" height="17"/></svg><svg style="left:810px;top:113px" width="17" height="17"><use href="#i-gauge" width="17" height="17"/></svg><svg style="left:836px;top:113px" width="17" height="17"><use href="#i-card" width="17" height="17"/></svg><svg style="left:862px;top:113px" width="17" height="17"><use href="#i-mrcard" width="17" height="17"/></svg><svg style="left:888px;top:113px" width="17" height="17"><use href="#i-table" width="17" height="17"/></svg><svg style="left:914px;top:113px" width="17" height="17"><use href="#i-matrix" width="17" height="17"/></svg>
<div class="a" style="left:926px;top:209px;width:28px;height:28px;background:#b9b6b3;border:1px solid #605e5c;border-radius:2px"></div>
<svg style="left:926px;top:209px" width="28" height="28" viewBox="0 0 28 28"><path d="M6.5 22.5v-13h4v13zM10.5 22.5v-17h6v17zM16.5 22.5v-12h5v12z" fill="#fff" stroke="#323130" stroke-width="1.1"/><path d="M10 3.5l-5.5 7h3.5l-3 6 7.5-8h-3.5l3-5z" fill="#f7b22c" stroke="#e86c11" stroke-width="0.8"/></svg>
<div class="a" style="left:926px;top:249px;width:28px;height:28px;background:#edebe9;border:1px solid #e1dfdd;border-radius:2px;box-shadow:0 1px 2px rgba(0,0,0,0.15)"></div>
<svg style="left:926px;top:249px" width="28" height="28" viewBox="0 0 28 28"><path d="M22 6l-8 9-2-2 9-8z" fill="#fff" stroke="#323130" stroke-width="0.9"/><path d="M6 18c2-1 4-5 6-4l2 2c-1 3-5 4-8 2z" fill="#3a96dd" stroke="#1f77d0" stroke-width="0.8"/><path d="M19.5 16v8M15.5 20h8" stroke="#13a10e" stroke-width="1.3"/></svg>
<!-- POPUP -->
<div class="a" style="left:962px;top:209px;width:182px;height:287px;background:#f3f2f1;border:1px solid #c8c6c4;box-shadow:0 2px 6px rgba(0,0,0,0.18)"></div>
<svg style="left:950px;top:205px" width="16" height="34" viewBox="0 0 16 34"><path d="M13 5L4 17l9 12" fill="#f3f2f1" stroke="#c8c6c4"/><rect x="13" y="3" width="3" height="28" fill="#f3f2f1"/></svg>
<div class="t" style="left:971px;top:222px;font-size:15.5px;color:#252423;-webkit-text-stroke:0.3px #252423">Suggest a visual</div>
<svg style="left:1123px;top:223px" width="12" height="12"><path d="M0.5 0.5l11 11M11.5 0.5l-11 11" stroke="#323130" stroke-width="1.1"/></svg>
<div class="t" style="left:971px;top:254px;font-size:12px;color:#252423">Visual types</div>
<div class="a" style="left:971px;top:271px;width:164px;height:32px;background:#fff;border:1px solid #8a8886;border-radius:2px"></div>
<div class="a" style="left:975px;top:275px;width:24px;height:24px;background:#e1dfdd;border:1px solid #8a8886"></div>
<div class="a" style="left:1107px;top:275px;width:1px;height:24px;background:#605e5c"></div>
<svg style="left:1115px;top:284px" width="13" height="8"><path d="M0.5 0.5l6 6 6-6" fill="none" stroke="#605e5c" stroke-width="1"/></svg>
<div class="a" style="left:971px;top:310px;width:32px;height:16px;background:#117865;border-radius:8px"></div>
<div class="t" style="left:975.5px;top:314.5px;font-size:9.5px;color:#fff;-webkit-text-stroke:0.3px #fff">On</div>
<div class="a" style="left:990px;top:314px;width:8px;height:8px;background:#fff;border-radius:50%"></div>
<div class="t" style="left:1011px;top:313px;font-size:12.2px;color:#252423">Arrange data for me</div>
<div class="t" style="left:971px;top:338px;font-size:12px;color:#252423">Data</div>
<div class="a" style="left:971px;top:356px;width:164px;height:132px;border:1px dashed #605e5c"></div>
<svg style="left:978px;top:278px" width="19" height="19"><use href="#i-line" width="19" height="19"/></svg><svg style="left:1004px;top:278px" width="19" height="19"><use href="#i-area" width="19" height="19"/></svg><svg style="left:1030px;top:278px" width="19" height="19"><use href="#i-sarea" width="19" height="19"/></svg><svg style="left:1056px;top:278px" width="19" height="19"><use href="#i-matrix" width="19" height="19"/></svg><svg style="left:1082px;top:278px" width="19" height="19"><use href="#i-table" width="19" height="19"/></svg><div class="a" style="left:976px;top:361px;width:154px;height:53px;background:#edebe9;border:1px solid #605e5c;border-radius:4px"></div>
<div class="t" style="left:983px;top:372px;font-size:12px;color:#252423">Fiscal</div>
<div class="t" style="left:991px;top:396px;font-size:12px;color:#252423">Month</div>
<svg style="left:1080px;top:369px" width="13" height="37"><path d="M0.5 0.5l12 12M12.5 0.5l-12 12M0.5 24.5l12 12M12.5 24.5l-12 12" stroke="#323130" stroke-width="1"/></svg>
<div class="a" style="left:1100px;top:368px;width:1px;height:39px;background:#323130"></div>
<svg style="left:1111px;top:381px" width="8" height="13"><path d="M0.5 0.5l6 6-6 6" fill="none" stroke="#323130" stroke-width="1"/></svg>
<div class="a" style="left:976px;top:419px;width:154px;height:29px;background:#edebe9;border:1px solid #605e5c;border-radius:4px"></div>
<div class="t" style="left:983px;top:428px;font-size:12px;color:#252423">Sales Amount</div>
<svg style="left:1080px;top:427px" width="13" height="13"><path d="M0.5 0.5l12 12M12.5 0.5l-12 12" stroke="#323130" stroke-width="1"/></svg>
<div class="a" style="left:1100px;top:426px;width:1px;height:16px;background:#323130"></div>
<svg style="left:1111px;top:427px" width="8" height="13"><path d="M0.5 0.5l6 6-6 6" fill="none" stroke="#323130" stroke-width="1"/></svg>
<div class="a" style="left:976px;top:453px;width:154px;height:29px;background:#fff;border:1px solid #605e5c;border-radius:2px"></div>
<div class="t" style="left:1053px;top:462px;font-size:12.5px;color:#252423;transform:translateX(-50%);-webkit-text-stroke:0.25px #252423">+Add data</div>

<svg style="left:1503px;top:174px" width="13" height="11"><path d="M6 0.5L1 5.5l5 5M12 0.5L7 5.5l5 5" fill="none" stroke="#252423" stroke-width="1.1"/></svg>
<svg style="left:1504px;top:202px" width="13" height="13"><path d="M0.5 5.5h4L11.5 1v11L4.5 7.5h-4z" fill="none" stroke="#252423" stroke-width="1.1"/></svg>
<div class="t" style="left:1509px;top:243px;font-size:14px;color:#252423;transform:translate(-50%,-50%) rotate(90deg);-webkit-text-stroke:0.2px #252423">Filters</div>

<div class="t" style="left:1534px;top:171px;font-size:16.3px;color:#252423;-webkit-text-stroke:0.3px #252423">Build</div>
<svg style="left:1662px;top:177px" width="16" height="4"><circle cx="2" cy="2" r="1.1" fill="#323130"/><circle cx="8" cy="2" r="1.1" fill="#323130"/><circle cx="14" cy="2" r="1.1" fill="#323130"/></svg>
<svg style="left:1686px;top:174px" width="13" height="11"><path d="M1 0.5l5 5-5 5M7 0.5l5 5-5 5" fill="none" stroke="#252423" stroke-width="1.1"/></svg>
<div class="t" style="left:1534px;top:200px;font-size:12px;color:#252423">Visual types</div>
<div class="a" style="left:1534px;top:217px;width:164px;height:188px;background:#fff;border:1px solid #8a8886;border-radius:2px"></div>
<div class="a" style="left:1539px;top:248px;width:24px;height:23px;background:#e1dfdd;border:1px solid #8a8886"></div>
<svg style="left:1542px;top:224px" width="19" height="19"><use href="#i-sbar" width="19" height="19"/></svg><svg style="left:1568px;top:224px" width="19" height="19"><use href="#i-scol" width="19" height="19"/></svg><svg style="left:1594px;top:224px" width="19" height="19"><use href="#i-cbar" width="19" height="19"/></svg><svg style="left:1620px;top:224px" width="19" height="19"><use href="#i-ccol" width="19" height="19"/></svg><svg style="left:1646px;top:224px" width="19" height="19"><use href="#i-pbar" width="19" height="19"/></svg><svg style="left:1672px;top:224px" width="19" height="19"><use href="#i-pcol" width="19" height="19"/></svg><svg style="left:1542px;top:250px" width="19" height="19"><use href="#i-line" width="19" height="19"/></svg><svg style="left:1568px;top:250px" width="19" height="19"><use href="#i-area" width="19" height="19"/></svg><svg style="left:1594px;top:250px" width="19" height="19"><use href="#i-sarea" width="19" height="19"/></svg><svg style="left:1620px;top:250px" width="19" height="19"><use href="#i-lscol" width="19" height="19"/></svg><svg style="left:1646px;top:250px" width="19" height="19"><use href="#i-lccol" width="19" height="19"/></svg><svg style="left:1672px;top:250px" width="19" height="19"><use href="#i-ribbon" width="19" height="19"/></svg><svg style="left:1542px;top:276px" width="19" height="19"><use href="#i-water" width="19" height="19"/></svg><svg style="left:1568px;top:276px" width="19" height="19"><use href="#i-funnel" width="19" height="19"/></svg><svg style="left:1594px;top:276px" width="19" height="19"><use href="#i-scatter" width="19" height="19"/></svg><svg style="left:1620px;top:276px" width="19" height="19"><use href="#i-pie" width="19" height="19"/></svg><svg style="left:1646px;top:276px" width="19" height="19"><use href="#i-donut" width="19" height="19"/></svg><svg style="left:1672px;top:276px" width="19" height="19"><use href="#i-treemap" width="19" height="19"/></svg><svg style="left:1542px;top:302px" width="19" height="19"><use href="#i-globe" width="19" height="19"/></svg><svg style="left:1568px;top:302px" width="19" height="19"><use href="#i-fmap" width="19" height="19"/></svg><svg style="left:1594px;top:302px" width="19" height="19"><use href="#i-azmap" width="19" height="19"/></svg><svg style="left:1620px;top:302px" width="19" height="19"><use href="#i-gauge" width="19" height="19"/></svg><svg style="left:1646px;top:302px" width="19" height="19"><use href="#i-card" width="19" height="19"/></svg><svg style="left:1672px;top:302px" width="19" height="19"><use href="#i-mrcard" width="19" height="19"/></svg><svg style="left:1542px;top:328px" width="19" height="19"><use href="#i-kpi" width="19" height="19"/></svg><svg style="left:1568px;top:328px" width="19" height="19"><use href="#i-slicer" width="19" height="19"/></svg><svg style="left:1594px;top:328px" width="19" height="19"><use href="#i-table" width="19" height="19"/></svg><svg style="left:1620px;top:328px" width="19" height="19"><use href="#i-matrix" width="19" height="19"/></svg><svg style="left:1646px;top:328px" width="19" height="19"><use href="#i-R" width="19" height="19"/></svg><svg style="left:1672px;top:328px" width="19" height="19"><use href="#i-Py" width="19" height="19"/></svg><svg style="left:1542px;top:354px" width="19" height="19"><use href="#i-keyinf" width="19" height="19"/></svg><svg style="left:1568px;top:354px" width="19" height="19"><use href="#i-decomp" width="19" height="19"/></svg><svg style="left:1594px;top:354px" width="19" height="19"><use href="#i-qa" width="19" height="19"/></svg><svg style="left:1620px;top:354px" width="19" height="19"><use href="#i-narr" width="19" height="19"/></svg><svg style="left:1646px;top:354px" width="19" height="19"><use href="#i-trophy" width="19" height="19"/></svg><svg style="left:1672px;top:354px" width="19" height="19"><use href="#i-pagin" width="19" height="19"/></svg><svg style="left:1542px;top:380px" width="19" height="19"><use href="#i-lcard" width="19" height="19"/></svg><svg style="left:1568px;top:380px" width="19" height="19"><use href="#i-lslicer" width="19" height="19"/></svg><svg style="left:1594px;top:380px" width="19" height="19"><use href="#i-arcgis" width="19" height="19"/></svg><svg style="left:1620px;top:380px" width="19" height="19"><use href="#i-papps" width="19" height="19"/></svg><svg style="left:1646px;top:380px" width="19" height="19"><use href="#i-pauto" width="19" height="19"/></svg><svg style="left:1672px;top:380px" width="19" height="19"><use href="#i-more" width="19" height="19"/></svg><div class="t" style="left:1534px;top:416px;font-size:12px;color:#252423">X-axis</div>
<div class="a" style="left:1534px;top:433px;width:164px;height:98px;border:1px dashed #797775"></div>
<div class="a" style="left:1539px;top:439px;width:154px;height:53px;background:#edebe9;border:1px solid #605e5c;border-radius:4px"></div>
<div class="t" style="left:1546px;top:450px;font-size:12px;color:#252423">Fiscal</div>
<div class="t" style="left:1554px;top:474px;font-size:12px;color:#252423">Month</div>
<svg style="left:1643px;top:447px" width="13" height="37"><path d="M0.5 0.5l12 12M12.5 0.5l-12 12M0.5 24.5l12 12M12.5 24.5l-12 12" stroke="#323130" stroke-width="1"/></svg>
<div class="a" style="left:1663px;top:446px;width:1px;height:39px;background:#323130"></div>
<svg style="left:1674px;top:459px" width="8" height="13"><path d="M0.5 0.5l6 6-6 6" fill="none" stroke="#323130" stroke-width="1"/></svg>
<div class="a" style="left:1539px;top:497px;width:154px;height:29px;background:#fff;border:1px solid #605e5c;border-radius:2px"></div>
<div class="t" style="left:1616px;top:506px;font-size:12.5px;color:#252423;transform:translateX(-50%);-webkit-text-stroke:0.25px #252423">+Add data</div>
<div class="t" style="left:1534px;top:542px;font-size:12px;color:#252423">Y-axis</div>
<div class="a" style="left:1534px;top:559px;width:164px;height:74px;border:1px dashed #797775"></div>
<div class="a" style="left:1539px;top:565px;width:154px;height:29px;background:#edebe9;border:1px solid #605e5c;border-radius:4px"></div>
<div class="t" style="left:1546px;top:574px;font-size:12px;color:#252423">Sales Amount</div>
<svg style="left:1643px;top:573px" width="13" height="13"><path d="M0.5 0.5l12 12M12.5 0.5l-12 12" stroke="#323130" stroke-width="1"/></svg>
<div class="a" style="left:1663px;top:572px;width:1px;height:16px;background:#323130"></div>
<svg style="left:1674px;top:573px" width="8" height="13"><path d="M0.5 0.5l6 6-6 6" fill="none" stroke="#323130" stroke-width="1"/></svg>
<div class="a" style="left:1539px;top:599px;width:154px;height:29px;background:#fff;border:1px solid #605e5c;border-radius:2px"></div>
<div class="t" style="left:1616px;top:608px;font-size:12.5px;color:#252423;transform:translateX(-50%);-webkit-text-stroke:0.25px #252423">+Add data</div>
<div class="t" style="left:1534px;top:644px;font-size:12px;color:#252423">Secondary y-axis</div>
<div class="a" style="left:1534px;top:661px;width:164px;height:40px;border:1px dashed #797775"></div>
<div class="a" style="left:1539px;top:667px;width:154px;height:29px;background:#fff;border:1px solid #605e5c;border-radius:2px"></div>
<div class="t" style="left:1616px;top:676px;font-size:12.5px;color:#252423;transform:translateX(-50%);-webkit-text-stroke:0.25px #252423">+Add data</div>
<div class="t" style="left:1534px;top:712px;font-size:12px;color:#252423">Legend</div>
<div class="a" style="left:1534px;top:729px;width:164px;height:40px;border:1px dashed #797775"></div>
<div class="a" style="left:1539px;top:735px;width:154px;height:29px;background:#fff;border:1px solid #605e5c;border-radius:2px"></div>
<div class="t" style="left:1616px;top:744px;font-size:12.5px;color:#252423;transform:translateX(-50%);-webkit-text-stroke:0.25px #252423">+Add data</div>
<div class="t" style="left:1534px;top:780px;font-size:12px;color:#252423">Small multiples</div>
<div class="a" style="left:1534px;top:797px;width:164px;height:40px;border:1px dashed #797775"></div>
<div class="a" style="left:1539px;top:803px;width:154px;height:29px;background:#fff;border:1px solid #605e5c;border-radius:2px"></div>
<div class="t" style="left:1616px;top:812px;font-size:12.5px;color:#252423;transform:translateX(-50%);-webkit-text-stroke:0.25px #252423">+Add data</div>
<div class="t" style="left:1534px;top:848px;font-size:12px;color:#252423">Tooltips</div>
<div class="a" style="left:1534px;top:865px;width:164px;height:40px;border:1px dashed #797775"></div>
<div class="a" style="left:1539px;top:871px;width:154px;height:29px;background:#fff;border:1px solid #605e5c;border-radius:2px"></div>
<div class="t" style="left:1616px;top:880px;font-size:12.5px;color:#252423;transform:translateX(-50%);-webkit-text-stroke:0.25px #252423">+Add data</div>

<div class="t" style="left:1715px;top:171px;font-size:16.3px;color:#252423;-webkit-text-stroke:0.3px #252423">Data</div>
<svg style="left:1843px;top:177px" width="16" height="4"><circle cx="2" cy="2" r="1.1" fill="#323130"/><circle cx="8" cy="2" r="1.1" fill="#323130"/><circle cx="14" cy="2" r="1.1" fill="#323130"/></svg>
<svg style="left:1867px;top:174px" width="13" height="11"><path d="M1 0.5l5 5-5 5M7 0.5l5 5-5 5" fill="none" stroke="#252423" stroke-width="1.1"/></svg>
<div class="a" style="left:1711px;top:205px;width:172px;height:27px;border:1px solid #8a8886;border-radius:3px"></div>
<svg style="left:1719px;top:211px" width="15" height="15"><circle cx="9.5" cy="5.5" r="4.5" fill="none" stroke="#605e5c" stroke-width="1.1"/><path d="M6.3 8.7L1 14" stroke="#605e5c" stroke-width="1.2"/></svg>
<div class="t" style="left:1740px;top:212px;font-size:13.5px;color:#605e5c">Search</div>
<svg style="left:1722px;top:246.0px" width="8" height="13"><path d="M1 0.5l5.5 6-5.5 6" fill="none" stroke="#605e5c" stroke-width="1"/></svg>
<svg style="left:1735px;top:246.0px" width="14" height="14"><rect x="1.5" y="1.5" width="11" height="11" rx="2" fill="none" stroke="#323130" stroke-width="1.1"/><path d="M1.5 5.2h11M1.5 8.8h11M5.2 1.5v11M8.8 1.5v11" stroke="#323130" stroke-width="1.1"/></svg>
<div class="t" style="left:1754px;top:248px;font-size:12px;color:#323130;letter-spacing:-0.15px">Customer</div>
<svg style="left:1722px;top:270.0px" width="8" height="13"><path d="M1 0.5l5.5 6-5.5 6" fill="none" stroke="#605e5c" stroke-width="1"/></svg>
<svg style="left:1735px;top:270.0px" width="14" height="14"><rect x="1.5" y="1.5" width="11" height="11" rx="2" fill="none" stroke="#323130" stroke-width="1.1"/><path d="M1.5 5.2h11M1.5 8.8h11M5.2 1.5v11M8.8 1.5v11" stroke="#323130" stroke-width="1.1"/></svg>
<div class="t" style="left:1754px;top:272px;font-size:12px;color:#323130;letter-spacing:-0.15px">Date</div>
<svg style="left:1742px;top:276.5px" width="12" height="12"><circle cx="6" cy="6" r="5.5" fill="#117865"/><path d="M3.5 6.2l1.8 1.8 3.3-3.5" fill="none" stroke="#fff" stroke-width="1.1"/></svg>
<svg style="left:1722px;top:294.0px" width="8" height="13"><path d="M1 0.5l5.5 6-5.5 6" fill="none" stroke="#605e5c" stroke-width="1"/></svg>
<svg style="left:1735px;top:294.0px" width="14" height="14"><rect x="1.5" y="1.5" width="11" height="11" rx="2" fill="none" stroke="#323130" stroke-width="1.1"/><path d="M1.5 5.2h11M1.5 8.8h11M5.2 1.5v11M8.8 1.5v11" stroke="#323130" stroke-width="1.1"/></svg>
<div class="t" style="left:1754px;top:296px;font-size:12px;color:#323130;letter-spacing:-0.15px">Product</div>
<svg style="left:1722px;top:318.0px" width="8" height="13"><path d="M1 0.5l5.5 6-5.5 6" fill="none" stroke="#605e5c" stroke-width="1"/></svg>
<svg style="left:1735px;top:318.0px" width="14" height="14"><rect x="1.5" y="1.5" width="11" height="11" rx="2" fill="none" stroke="#323130" stroke-width="1.1"/><path d="M1.5 5.2h11M1.5 8.8h11M5.2 1.5v11M8.8 1.5v11" stroke="#323130" stroke-width="1.1"/></svg>
<div class="t" style="left:1754px;top:320px;font-size:12px;color:#323130;letter-spacing:-0.15px">Reseller</div>
<svg style="left:1722px;top:342.0px" width="8" height="13"><path d="M1 0.5l5.5 6-5.5 6" fill="none" stroke="#605e5c" stroke-width="1"/></svg>
<svg style="left:1735px;top:342.0px" width="14" height="14"><rect x="1.5" y="1.5" width="11" height="11" rx="2" fill="none" stroke="#323130" stroke-width="1.1"/><path d="M1.5 5.2h11M1.5 8.8h11M5.2 1.5v11M8.8 1.5v11" stroke="#323130" stroke-width="1.1"/></svg>
<div class="t" style="left:1754px;top:344px;font-size:12px;color:#323130;letter-spacing:-0.15px">Sales</div>
<svg style="left:1742px;top:348.5px" width="12" height="12"><circle cx="6" cy="6" r="5.5" fill="#117865"/><path d="M3.5 6.2l1.8 1.8 3.3-3.5" fill="none" stroke="#fff" stroke-width="1.1"/></svg>
<svg style="left:1722px;top:366.0px" width="8" height="13"><path d="M1 0.5l5.5 6-5.5 6" fill="none" stroke="#605e5c" stroke-width="1"/></svg>
<svg style="left:1735px;top:366.0px" width="14" height="14"><rect x="1.5" y="1.5" width="11" height="11" rx="2" fill="none" stroke="#323130" stroke-width="1.1"/><path d="M1.5 5.2h11M1.5 8.8h11M5.2 1.5v11M8.8 1.5v11" stroke="#323130" stroke-width="1.1"/></svg>
<div class="t" style="left:1754px;top:368px;font-size:12px;color:#323130;letter-spacing:-0.15px">Sales Order</div>
<svg style="left:1722px;top:390.0px" width="8" height="13"><path d="M1 0.5l5.5 6-5.5 6" fill="none" stroke="#605e5c" stroke-width="1"/></svg>
<svg style="left:1735px;top:390.0px" width="14" height="14"><rect x="1.5" y="1.5" width="11" height="11" rx="2" fill="none" stroke="#323130" stroke-width="1.1"/><path d="M1.5 5.2h11M1.5 8.8h11M5.2 1.5v11M8.8 1.5v11" stroke="#323130" stroke-width="1.1"/></svg>
<div class="t" style="left:1754px;top:392px;font-size:12px;color:#323130;letter-spacing:-0.15px">Sales Territory</div>
<svg style="left:1722px;top:414.0px" width="8" height="13"><path d="M1 0.5l5.5 6-5.5 6" fill="none" stroke="#605e5c" stroke-width="1"/></svg>
<svg style="left:1735px;top:414.0px" width="14" height="14"><rect x="1.5" y="1.5" width="11" height="11" rx="2" fill="none" stroke="#323130" stroke-width="1.1"/><path d="M1.5 5.2h11M1.5 8.8h11M5.2 1.5v11M8.8 1.5v11" stroke="#323130" stroke-width="1.1"/></svg>
<div class="t" style="left:1754px;top:416px;font-size:12px;color:#323130;letter-spacing:-0.15px">Table</div>

<div class="a" style="left:1888px;top:160px;width:32px;height:32px;background:#e1dfdd;border:2px solid #605e5c"></div>
<div class="a" style="left:1888px;top:192px;width:32px;height:32px;background:#e1dfdd;border:2px solid #605e5c"></div>
<svg style="left:1888px;top:160px" width="32" height="64" viewBox="0 0 32 64">
<path d="M9.5 9.5v12c0 1.8 3 3 7 3s7-1.2 7-3v-12" fill="#fff" stroke="#323130"/><ellipse cx="16.5" cy="9.5" rx="7" ry="2.8" fill="#fff" stroke="#323130"/>
<path d="M8.5 56.5v-9h5v9M13.5 56.5v-16h5v6" fill="#fff" stroke="#323130"/><path d="M17.5 48.5v8c0 1 1.8 1.8 4 1.8s4-.8 4-1.8v-8" fill="#fff" stroke="#e86c11" stroke-width="1.1"/><ellipse cx="21.5" cy="48.5" rx="4" ry="1.8" fill="#fff" stroke="#e86c11" stroke-width="1.1"/>
</svg>
<svg style="left:1888px;top:224px" width="32" height="64" viewBox="0 0 32 64">
<path d="M8.5 21.5v-8h5v8M13.5 21.5v-13h5v13M18.5 12.5h4v3" fill="none" stroke="#323130"/><path d="M25.5 11l-8 9" stroke="#323130" stroke-width="1.3"/><path d="M10 26c3 0 6-3 7-6l2 1c-1 4-5 6-9 5z" fill="#3a96dd" stroke="#1f77d0" stroke-width="0.7"/>
<path d="M16.5 39v17M8 47.5h17" stroke="#252423" stroke-width="1.2"/>
</svg>
<div class="a" style="left:1888px;top:975px;width:32px;height:32px;border-top:1px solid #e1dfdd;border-left:1px solid #e1dfdd;background:#faf9f8"></div>
<svg style="left:1894px;top:981px" width="20" height="20" viewBox="0 0 20 20"><path d="M8.2 1.5h3.6l.6 2.6 1.6.9 2.5-.8 1.8 3.1-2 1.8v1.8l2 1.8-1.8 3.1-2.5-.8-1.6.9-.6 2.6H8.2l-.6-2.6-1.6-.9-2.5.8-1.8-3.1 2-1.8V9.1l-2-1.8 1.8-3.1 2.5.8 1.6-.9z" fill="none" stroke="#323130" stroke-width="1.1" stroke-linejoin="round"/><circle cx="10" cy="10" r="2.6" fill="none" stroke="#323130" stroke-width="1.1"/></svg>

<div class="a" style="left:168px;top:972px;width:232px;height:35px;background:#fff;border-left:1px solid #8a8886"></div>
<div class="a" style="left:245px;top:972px;width:1px;height:35px;background:#c8c6c4"></div>
<div class="a" style="left:321px;top:972px;width:1px;height:35px;background:#c8c6c4"></div>
<div class="a" style="left:322px;top:1003px;width:78px;height:4px;background:#117865"></div>
<div class="a" style="left:400px;top:974px;width:39px;height:32px;background:#117865"></div>
<svg style="left:412px;top:983px" width="14" height="14"><path d="M7 1v12M1 7h12" stroke="#fff" stroke-width="2.6"/></svg>
<div class="t" style="left:206px;top:986px;font-size:11.5px;color:#252423;transform:translateX(-50%)">Page 1</div>
<div class="t" style="left:283px;top:986px;font-size:11.5px;color:#252423;transform:translateX(-50%)">Page 2</div>
<div class="t" style="left:360px;top:986px;font-size:11.5px;color:#252423;transform:translateX(-50%)">Page 3</div>
<svg style="left:50px;top:976px" width="70" height="30" viewBox="0 0 70 30">
<rect x="3.5" y="3.5" width="18" height="11" rx="1" fill="none" stroke="#605e5c" stroke-width="1.2"/><path d="M12.5 15v3M8 18.5h9" stroke="#605e5c" stroke-width="1.2"/>
<rect x="1" y="24" width="24" height="3" rx="1.5" fill="#117865"/>
<rect x="50.5" y="1.5" width="12" height="19" rx="1.5" fill="none" stroke="#605e5c" stroke-width="1.2"/><rect x="56" y="16" width="2" height="2" fill="#605e5c"/>
</svg>
<svg style="left:133px;top:985px" width="30" height="10"><path d="M5 0.5v9L0.5 5z" fill="#c8c6c4"/><path d="M23 0.5v9L27.5 5z" fill="#c8c6c4"/></svg>

<div class="t" style="left:4px;top:1015px;font-size:12px;color:#484644">Page 3 of 3</div>
<svg style="left:74px;top:1012px" width="14" height="14"><path d="M2.5 2.5h6M2.5 2.5v10h9v-5" fill="none" stroke="#605e5c"/><path d="M5 9l5-5 2 2-5 5z" fill="none" stroke="#605e5c"/></svg>
<div class="t" style="left:91px;top:1015px;font-size:12px;color:#484644">Non-Business</div>
<div class="a" style="left:1708px;top:1019px;width:5px;height:1px;background:#484644"></div>
<div class="a" style="left:1717px;top:1019px;width:100px;height:1px;background:#605e5c"></div>
<div class="a" style="left:1767px;top:1014px;width:4px;height:11px;background:#484644"></div>
<svg style="left:1823px;top:1015px" width="9" height="9"><path d="M4.5 0v9M0 4.5h9" stroke="#484644" stroke-width="1.1"/></svg>
<div class="t" style="left:1845px;top:1015px;font-size:12px;color:#605e5c">112%</div>
<svg style="left:1886px;top:1013px" width="16" height="13"><path d="M1 4V1h3M12 1h3v3M15 9v3h-3M4 12H1V9" fill="none" stroke="#605e5c" stroke-width="1.1"/><rect x="0.5" y="0.5" width="15" height="12" fill="none" stroke="#605e5c" stroke-width="0.6"/></svg>
</body></html>
